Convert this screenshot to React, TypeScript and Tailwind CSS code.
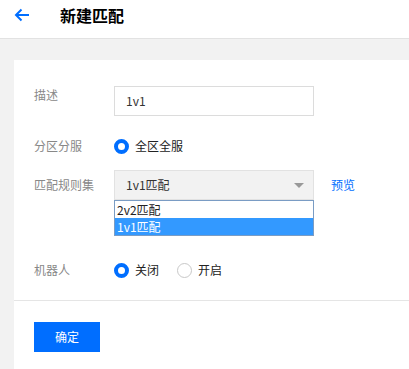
import React from 'react';

const font = { fontFamily: '"Noto Sans CJK SC", "Noto Sans", sans-serif' };

function Radio({ checked, label }: { checked: boolean; label: string }) {
  return (
    <label className="flex items-center gap-[6px] text-[12px] text-[#222]">
      <span
        className={
          checked
            ? 'w-[15px] h-[15px] rounded-full border-[4px] border-[#006eff] bg-white'
            : 'w-[15px] h-[15px] rounded-full border border-[#c8c8c8] bg-white'
        }
      />
      {label}
    </label>
  );
}

export default function App() {
  return (
    <div className="w-[409px] h-[369px] bg-[#f2f2f2] overflow-hidden" style={font}>
      {/* 顶部标题栏 */}
      <div className="h-[39px] bg-white border-b border-[#e2e2e2] flex items-start pt-[5px]">
        <svg className="ml-[14px] mt-[2px] w-[16px] h-[16px]" viewBox="0 0 16 16" fill="none" stroke="#006eff" strokeWidth={2}>
          <path d="M15 8H2M7.5 2.5L2 8l5.5 5.5" />
        </svg>
        <h1 className="ml-[30px] text-[16px] font-bold text-black leading-[20px]">新建匹配</h1>
      </div>

      <div className="pt-[21px] pl-[14px]">
        <div className="bg-white h-[320px]">
          <div className="px-[20px] pt-[26px] pb-[20px] border-b border-[#e5e5e5]">
            {/* 描述 */}
            <div className="flex items-start">
              <div className="w-[80px] text-[12px] text-[#888] leading-[20px] -mt-[1px]">描述</div>
              <div className="w-[200px] h-[30px] border border-[#dcdcdc] flex items-center px-[11px] text-[12px] text-[#333]">
                1v1
              </div>
            </div>

            {/* 分区分服 */}
            <div className="flex items-center h-[20px] mt-[20px]">
              <div className="w-[80px] text-[12px] text-[#888]">分区分服</div>
              <Radio checked label="全区全服" />
            </div>

            {/* 匹配规则集 */}
            <div className="flex items-center h-[30px] mt-[14px]">
              <div className="w-[80px] text-[12px] text-[#888]">匹配规则集</div>
              <div className="relative w-[200px] h-[30px]">
                <div className="h-full bg-[#f2f2f2] border border-[#e2e2e2] flex items-center justify-between pl-[11px] pr-[9px] text-[12px] text-[#333]">
                  <span>1v1匹配</span>
                  <span className="w-0 h-0 border-l-[5px] border-r-[5px] border-t-[5px] border-l-transparent border-r-transparent border-t-[#999]" />
                </div>
                <div className="absolute left-0 top-[30px] w-[200px] bg-white border border-[#7a9cc4] text-[12px] leading-[17px]">
                  <div className="px-[2px] h-[17px] text-[#222]">2v2匹配</div>
                  <div className="px-[2px] h-[17px] bg-[#3399ff] text-white">1v1匹配</div>
                </div>
              </div>
              <a className="ml-[17px] text-[12px] text-[#006eff]">预览</a>
            </div>

            {/* 机器人 */}
            <div className="flex items-center h-[20px] mt-[60px]">
              <div className="w-[80px] text-[12px] text-[#888]">机器人</div>
              <div className="flex items-center gap-[18px]">
                <Radio checked label="关闭" />
                <Radio checked={false} label="开启" />
              </div>
            </div>
          </div>

          <div className="px-[20px] pt-[21px]">
            <button className="w-[66px] h-[30px] bg-[#006eff] text-white text-[12px]">确定</button>
          </div>
        </div>
      </div>
    </div>
  );
}
